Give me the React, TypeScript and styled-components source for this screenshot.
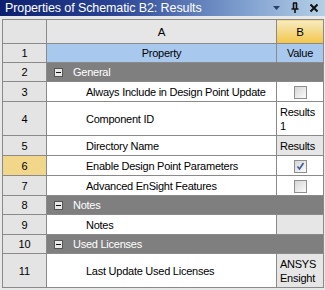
import styled, { createGlobalStyle } from "styled-components"

type Row =
  | { n: number; kind: "group"; label: string }
  | { n: number; kind: "prop"; label: string; value?: string; check?: boolean; readOnly?: boolean; tall?: boolean; selected?: boolean };

const rows: Row[] = [
  { n: 2, kind: "group", label: "General" },
  { n: 3, kind: "prop", label: "Always Include in Design Point Update", check: false },
  { n: 4, kind: "prop", label: "Component ID", value: "Results 1", tall: true },
  { n: 5, kind: "prop", label: "Directory Name", value: "Results", readOnly: true },
  { n: 6, kind: "prop", label: "Enable Design Point Parameters", check: true, selected: true },
  { n: 7, kind: "prop", label: "Advanced EnSight Features", check: false },
  { n: 8, kind: "group", label: "Notes" },
  { n: 9, kind: "prop", label: "Notes", value: "", readOnly: true },
  { n: 10, kind: "group", label: "Used Licenses" },
  { n: 11, kind: "prop", label: "Last Update Used Licenses", value: "ANSYS Ensight", readOnly: true, tall: true },
];

export default function App() {
  return (
    <>
      <GlobalStyle />
      <Panel>
        <TitleBar>
          <Title>Properties of Schematic B2: Results</Title>
          <TitleIcons>
            <svg width="9" height="6" viewBox="0 0 9 6"><path d="M1 1h7L4.5 5z" fill="#2b3f6e" /></svg>
            <svg width="10" height="12" viewBox="0 0 10 12">
              <path d="M3 1h4M3.5 1v6M6.5 1v6M1.5 7h7M5 7v4" stroke="#111" strokeWidth="1.6" fill="none" />
            </svg>
            <svg width="10" height="10" viewBox="0 0 10 10">
              <path d="M1.5 1.5l7 7M8.5 1.5l-7 7" stroke="#111" strokeWidth="2" />
            </svg>
          </TitleIcons>
        </TitleBar>
        <Frame>
          <Grid>
            <colgroup>
              <col style={{ width: 44 }} />
              <col style={{ width: 230 }} />
              <col style={{ width: 47 }} />
            </colgroup>
            <tbody>
              <tr>
                <NumCell $h={23} />
                <HeadCell>A</HeadCell>
                <HeadCell $active>B</HeadCell>
              </tr>
              <tr>
                <NumCell $h={18}>1</NumCell>
                <TopCell>Property</TopCell>
                <TopCell>Value</TopCell>
              </tr>
              {rows.map(r =>
                r.kind === "group" ? (
                  <tr key={r.n}>
                    <NumCell $h={18}>{r.n}</NumCell>
                    <GroupCell colSpan={2}>
                      <GroupInner>
                        <Minus />
                        {r.label}
                      </GroupInner>
                    </GroupCell>
                  </tr>
                ) : (
                  <tr key={r.n}>
                    <NumCell $h={r.tall ? 33 : 19} $selected={r.selected}>{r.n}</NumCell>
                    <PropCell>{r.label}</PropCell>
                    <ValueCell $readOnly={r.readOnly} $center={r.check !== undefined}>
                      {r.check !== undefined ? <CheckBox $checked={r.check}>{r.check && (
                        <svg width="9" height="9" viewBox="0 0 9 9"><path d="M1.5 4.5l2 2.5 4-6" stroke="#3c5a9a" strokeWidth="1.6" fill="none" /></svg>
                      )}</CheckBox> : r.value}
                    </ValueCell>
                  </tr>
                )
              )}
            </tbody>
          </Grid>
        </Frame>
      </Panel>
    </>
  );
}

const GlobalStyle = createGlobalStyle`
  html, body { margin: 0; padding: 0; background: #fff; }
  body { font-family: "Liberation Sans", Arial, sans-serif; }
`;

const Panel = styled.div`
  width: 325px;
  height: 290px;
  background: #d4d4d4;
  display: flex;
  flex-direction: column;
`;

const TitleBar = styled.div`
  height: 17px;
  display: flex;
  align-items: center;
  justify-content: space-between;
  padding: 0 6px 0 5px;
  background: linear-gradient(90deg, #0c1f6e 0%, #2a4494 35%, #7f9fcf 75%, #b5d0e6 100%);
`;

const Title = styled.span`
  color: #fff;
  font-family: "Liberation Sans", Arial, sans-serif;
  font-size: 12.5px;
  letter-spacing: -0.1px;
`;

const TitleIcons = styled.div`
  display: flex;
  align-items: center;
  gap: 9px;
`;

const Frame = styled.div`
  flex: 1;
  padding: 3px 2px 2px 2px;
  background: #e8e8e8;
`;

const Grid = styled.table`
  border-collapse: collapse;
  table-layout: fixed;
  width: 321px;
  font-family: "Liberation Sans", Arial, sans-serif;
  font-size: 11px;
  letter-spacing: -0.25px;
  color: #000;
  background: #fff;

  td {
    border: 1px solid #8a8a8a;
    padding: 0;
    white-space: nowrap;
  }
`;

const NumCell = styled.td<{ $h: number; $selected?: boolean }>`
  height: ${p => p.$h}px;
  background: ${p => (p.$selected ? "#f2d68a" : "#e4e4e4")};
  text-align: center;
  letter-spacing: 0;
`;

const HeadCell = styled.td<{ $active?: boolean }>`
  text-align: center;
  font-size: 11.5px;
  background: ${p => (p.$active ? "linear-gradient(#f7ebc3, #f3c648)" : "#e6e6e6")};
`;

const TopCell = styled.td`
  text-align: center;
  background: #a9c8ee;
`;

const GroupCell = styled.td`
  background: #7f7f7f;
  color: #fff;
`;

const GroupInner = styled.div`
  display: flex;
  align-items: center;
  gap: 10px;
  padding-left: 7px;
`;

const Minus = styled.span`
  width: 9px;
  height: 9px;
  box-sizing: border-box;
  background: #e8e8e8;
  border: 1px solid #555;
  position: relative;
  &::after {
    content: "";
    position: absolute;
    left: 1px;
    right: 1px;
    top: 3px;
    height: 1px;
    background: #111;
  }
`;

const PropCell = styled.td`
  padding-left: 39px !important;
`;

const ValueCell = styled.td<{ $readOnly?: boolean; $center?: boolean }>`
  background: ${p => (p.$readOnly ? "#e6e6e6" : "#fff")};
  text-align: ${p => (p.$center ? "center" : "left")};
  padding: 0 2px 0 3px !important;
  line-height: 14px;
  white-space: normal !important;
`;

const CheckBox = styled.span<{ $checked: boolean }>`
  display: inline-flex;
  align-items: center;
  justify-content: center;
  vertical-align: middle;
  width: 13px;
  height: 13px;
  box-sizing: border-box;
  border: 1px solid #8f8f8f;
  background: linear-gradient(135deg, #d6d6d6, #fbfbfb);
`;
